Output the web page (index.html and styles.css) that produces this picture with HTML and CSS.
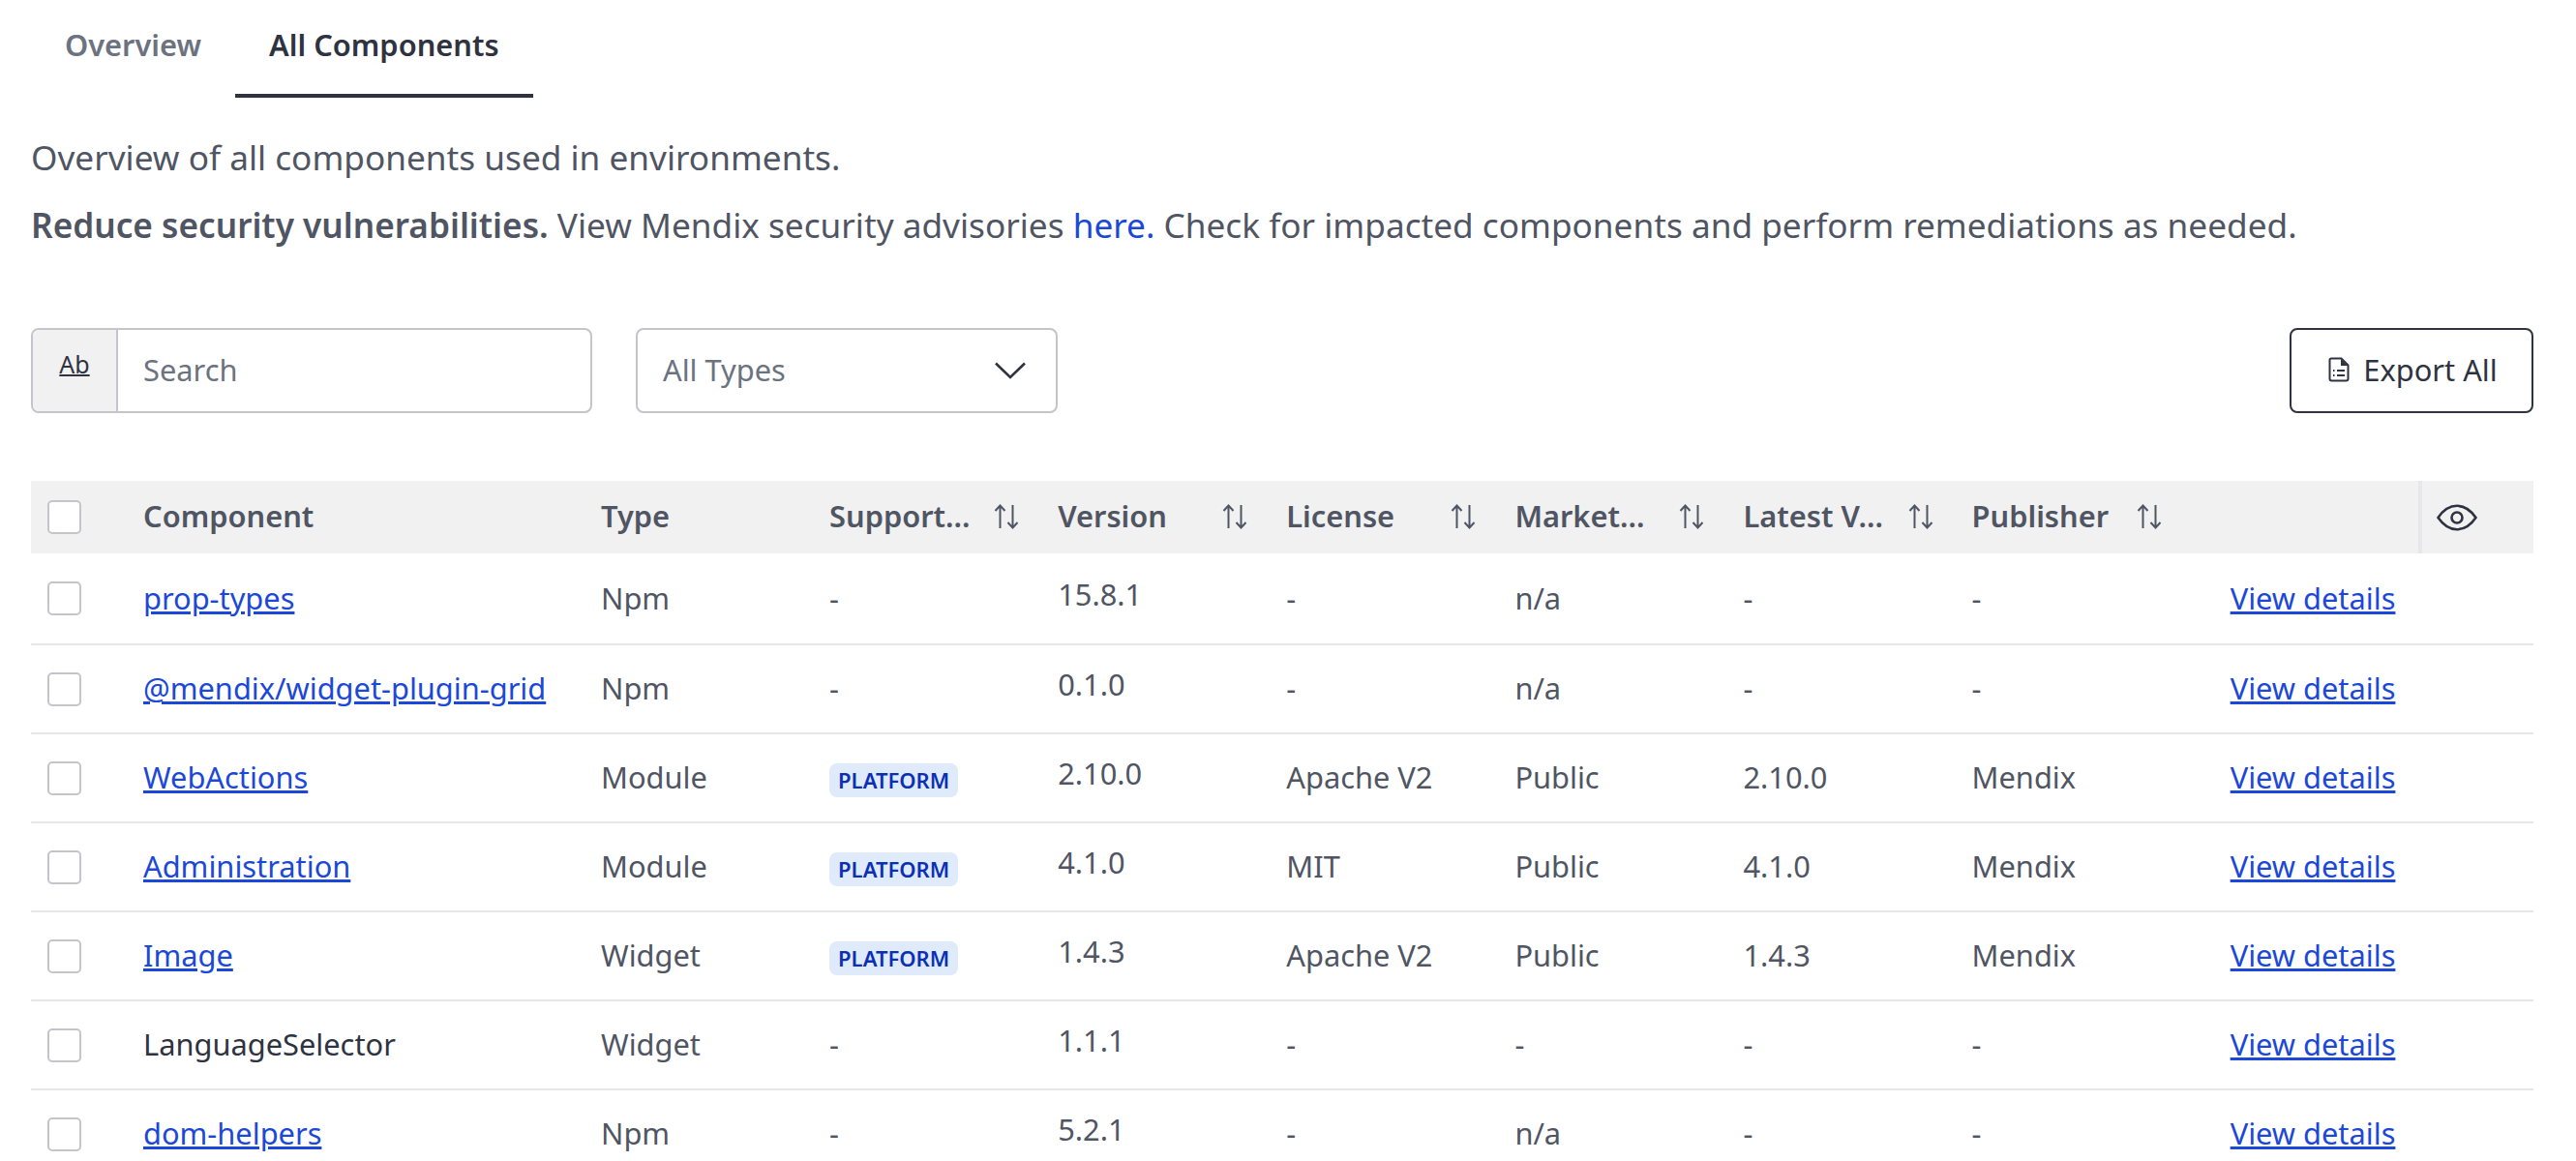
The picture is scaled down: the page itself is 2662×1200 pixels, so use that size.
FILE: index.html
```html
<!DOCTYPE html>
<html lang="en">
<head>
  <meta charset="UTF-8">
  <meta name="viewport" content="width=device-width, initial-scale=1.0">
  <title>All Components</title>
  <link rel="stylesheet" href="styles.css">
</head>
<body>

  <svg class="sprite" width="0" height="0" aria-hidden="true">
    <symbol id="sort" viewBox="0 0 26 26">
      <path d="M6.5 25V1.5M1.5 7L6.5 1.5L11.5 7M19.5 1V24.5M14.5 19L19.5 24.5L24.5 19" fill="none" stroke="currentColor" stroke-width="2"/>
    </symbol>
  </svg>

  <nav class="tabs">
    <a class="tab">Overview</a>
    <a class="tab active">All Components</a>
  </nav>

  <p class="intro">Overview of all components used in environments.</p>
  <p class="intro"><b>Reduce security vulnerabilities.</b> View Mendix security advisories <a class="here">here.</a> Check for impacted components and perform remediations as needed.</p>

  <div class="controls">
    <div class="search">
      <span class="search-mode">Ab</span>
      <span class="search-input">Search</span>
    </div>
    <div class="select">
      <span>All Types</span>
      <svg width="34" height="20" viewBox="0 0 34 20"><path d="M2 2.5L17 17L32 2.5" fill="none" stroke="#2f3341" stroke-width="2.6"/></svg>
    </div>
    <button class="export">
      <svg width="22" height="26" viewBox="0 0 22 26"><path d="M13 2L20 9H13Z" fill="currentColor"/><path d="M3 1.5H13.5L20.5 8.5V22.5A2 2 0 0 1 18.5 24.5H3.5A2 2 0 0 1 1.5 22.5V3A1.5 1.5 0 0 1 3 1.5ZM5 14H6.5M9 14H17M5 19H6.5M9 19H17" fill="none" stroke="currentColor" stroke-width="2"/></svg>
      Export All
    </button>
  </div>

  <table class="grid">
    <colgroup>
      <col class="col-check"><col class="col-name">
      <col class="col-data"><col class="col-data"><col class="col-data"><col class="col-data"><col class="col-data"><col class="col-data"><col class="col-data">
      <col class="col-link"><col class="col-eye">
    </colgroup>
    <thead>
      <tr>
        <th><span class="check"></span></th>
        <th>Component</th>
        <th>Type</th>
        <th><div class="sortable"><span>Support…</span><svg class="sort-icon"><use href="#sort"/></svg></div></th>
        <th><div class="sortable"><span>Version</span><svg class="sort-icon"><use href="#sort"/></svg></div></th>
        <th><div class="sortable"><span>License</span><svg class="sort-icon"><use href="#sort"/></svg></div></th>
        <th><div class="sortable"><span>Market…</span><svg class="sort-icon"><use href="#sort"/></svg></div></th>
        <th><div class="sortable"><span>Latest V…</span><svg class="sort-icon"><use href="#sort"/></svg></div></th>
        <th><div class="sortable"><span>Publisher</span><svg class="sort-icon"><use href="#sort"/></svg></div></th>
        <th></th>
        <th class="eye-cell">
          <svg width="42" height="28" viewBox="0 0 42 28"><path d="M1.5 14C7 6 13.5 1.8 21 1.8S35 6 40.5 14C35 22 28.5 26.2 21 26.2S7 22 1.5 14Z" fill="none" stroke="#2f3341" stroke-width="2.6"/><circle cx="21" cy="14" r="5.5" fill="none" stroke="#2f3341" stroke-width="2.6"/></svg>
        </th>
      </tr>
    </thead>
    <tbody>
      <tr>
        <td><span class="check"></span></td>
        <td><a class="link">prop-types</a></td>
        <td>Npm</td><td>-</td><td class="version">15.8.1</td><td>-</td><td>n/a</td><td>-</td><td>-</td>
        <td class="details"><a class="link">View details</a></td><td></td>
      </tr>
      <tr>
        <td><span class="check"></span></td>
        <td><a class="link">@mendix/widget-plugin-grid</a></td>
        <td>Npm</td><td>-</td><td class="version">0.1.0</td><td>-</td><td>n/a</td><td>-</td><td>-</td>
        <td class="details"><a class="link">View details</a></td><td></td>
      </tr>
      <tr>
        <td><span class="check"></span></td>
        <td><a class="link">WebActions</a></td>
        <td>Module</td><td><span class="badge">PLATFORM</span></td><td class="version">2.10.0</td><td>Apache V2</td><td>Public</td><td>2.10.0</td><td>Mendix</td>
        <td class="details"><a class="link">View details</a></td><td></td>
      </tr>
      <tr>
        <td><span class="check"></span></td>
        <td><a class="link">Administration</a></td>
        <td>Module</td><td><span class="badge">PLATFORM</span></td><td class="version">4.1.0</td><td>MIT</td><td>Public</td><td>4.1.0</td><td>Mendix</td>
        <td class="details"><a class="link">View details</a></td><td></td>
      </tr>
      <tr>
        <td><span class="check"></span></td>
        <td><a class="link">Image</a></td>
        <td>Widget</td><td><span class="badge">PLATFORM</span></td><td class="version">1.4.3</td><td>Apache V2</td><td>Public</td><td>1.4.3</td><td>Mendix</td>
        <td class="details"><a class="link">View details</a></td><td></td>
      </tr>
      <tr>
        <td><span class="check"></span></td>
        <td class="plain-name">LanguageSelector</td>
        <td>Widget</td><td>-</td><td class="version">1.1.1</td><td>-</td><td>-</td><td>-</td><td>-</td>
        <td class="details"><a class="link">View details</a></td><td></td>
      </tr>
      <tr>
        <td><span class="check"></span></td>
        <td><a class="link">dom-helpers</a></td>
        <td>Npm</td><td>-</td><td class="version">5.2.1</td><td>-</td><td>n/a</td><td>-</td><td>-</td>
        <td class="details"><a class="link">View details</a></td><td></td>
      </tr>
    </tbody>
  </table>

</body>
</html>
```

FILE: styles.css
```css
html, body {
  height: 1200px;
  overflow: hidden;
}
body {
  margin: 0;
  padding: 0 44px 0 32px;
  background: #fff;
  color: #4f5563;
  font-family: "Noto Sans", sans-serif;
  font-size: 30.8px;
}
.sprite {
  position: absolute;
}

.tabs {
  display: flex;
  height: 101px;
}
.tab {
  padding: 25px 35px 0;
  height: 101px;
  box-sizing: border-box;
  line-height: 42px;
  font-weight: 600;
  color: #6b7280;
}
.tab.active {
  color: #2f3341;
  border-bottom: 4px solid #2f3341;
}

.intro {
  margin: 0;
  padding-top: 37px;
  padding-bottom: 1px;
  font-size: 35.2px;
  line-height: 48px;
}
.intro + .intro {
  padding-top: 21px;
  padding-bottom: 1px;
}
.intro b {
  font-weight: 600;
}
.here {
  color: #1b48d8;
}

.controls {
  display: flex;
  align-items: center;
  margin-top: 82px;
}
.search {
  display: flex;
  width: 580px;
  height: 88px;
  box-sizing: border-box;
  border: 2px solid #c4c5cb;
  border-radius: 8px;
  overflow: hidden;
}
.search-mode {
  width: 88px;
  flex: none;
  box-sizing: border-box;
  padding-top: 20px;
  background: #f1f1f2;
  border-right: 2px solid #c4c5cb;
  color: #2f3341;
  font-size: 25px;
  line-height: 30px;
  text-align: center;
  text-decoration: underline;
  text-decoration-thickness: 2px;
}
.search-input {
  padding-left: 26px;
  line-height: 82px;
  color: #6b7280;
}
.select {
  display: flex;
  align-items: center;
  justify-content: space-between;
  width: 436px;
  height: 88px;
  box-sizing: border-box;
  margin-left: 45px;
  padding: 0 30px 0 26px;
  border: 2px solid #c4c5cb;
  border-radius: 8px;
  color: #6b7280;
}
.select span {
  padding-bottom: 2px;
}
.export {
  display: flex;
  align-items: center;
  justify-content: center;
  gap: 14px;
  margin-left: auto;
  width: 252px;
  height: 88px;
  padding: 0 0 2px 3px;
  background: #fff;
  border: 2px solid #2f3341;
  border-radius: 8px;
  color: #2f3341;
  font: inherit;
}

.grid {
  width: 2586px;
  margin-top: 70px;
  border-collapse: collapse;
  table-layout: fixed;
}
.col-check { width: 105px; }
.col-name { width: 473px; }
.col-data { width: 236.1px; }
.col-link { width: 238px; }
.col-eye { width: 117.3px; }

.grid th {
  height: 71px;
  padding: 0 11px 4px;
  background: #f1f1f1;
  font-weight: 600;
  text-align: left;
}
.grid td {
  height: 88px;
  padding: 0 11px 2px;
  border-bottom: 2px solid #e7e7e9;
}
.grid tbody tr:first-child td {
  height: 91px;
}
.grid th:first-child, .grid td:first-child {
  padding: 0 11px 0 17px;
}
.check {
  display: block;
  width: 35px;
  height: 35px;
  box-sizing: border-box;
  background: #fff;
  border: 2px solid #c4c5cb;
  border-radius: 5px;
}
.sortable {
  display: flex;
  align-items: center;
  justify-content: space-between;
  padding-right: 18px;
}
.sort-icon {
  width: 26px;
  height: 26px;
  margin-top: 2px;
  color: #4f5563;
}
.grid th.eye-cell {
  padding-bottom: 0;
  border-left: 4px solid #e7e7e9;
}
.eye-cell svg {
  display: block;
  margin-left: 4px;
}
.link {
  color: #1b48d8;
  text-decoration: underline;
}
.plain-name {
  color: #2f3341;
}
.grid td.version {
  height: 80px;
  padding-bottom: 10px;
}
.grid tbody tr:first-child td.version {
  height: 83px;
}
.grid td.details {
  padding-left: 42px;
  white-space: nowrap;
}
.badge {
  display: inline-block;
  padding: 0 9px;
  background: #dfebfb;
  border-radius: 8px;
  color: #0c30b5;
  font-size: 22px;
  font-weight: 600;
  line-height: 35px;
  vertical-align: middle;
}
```
